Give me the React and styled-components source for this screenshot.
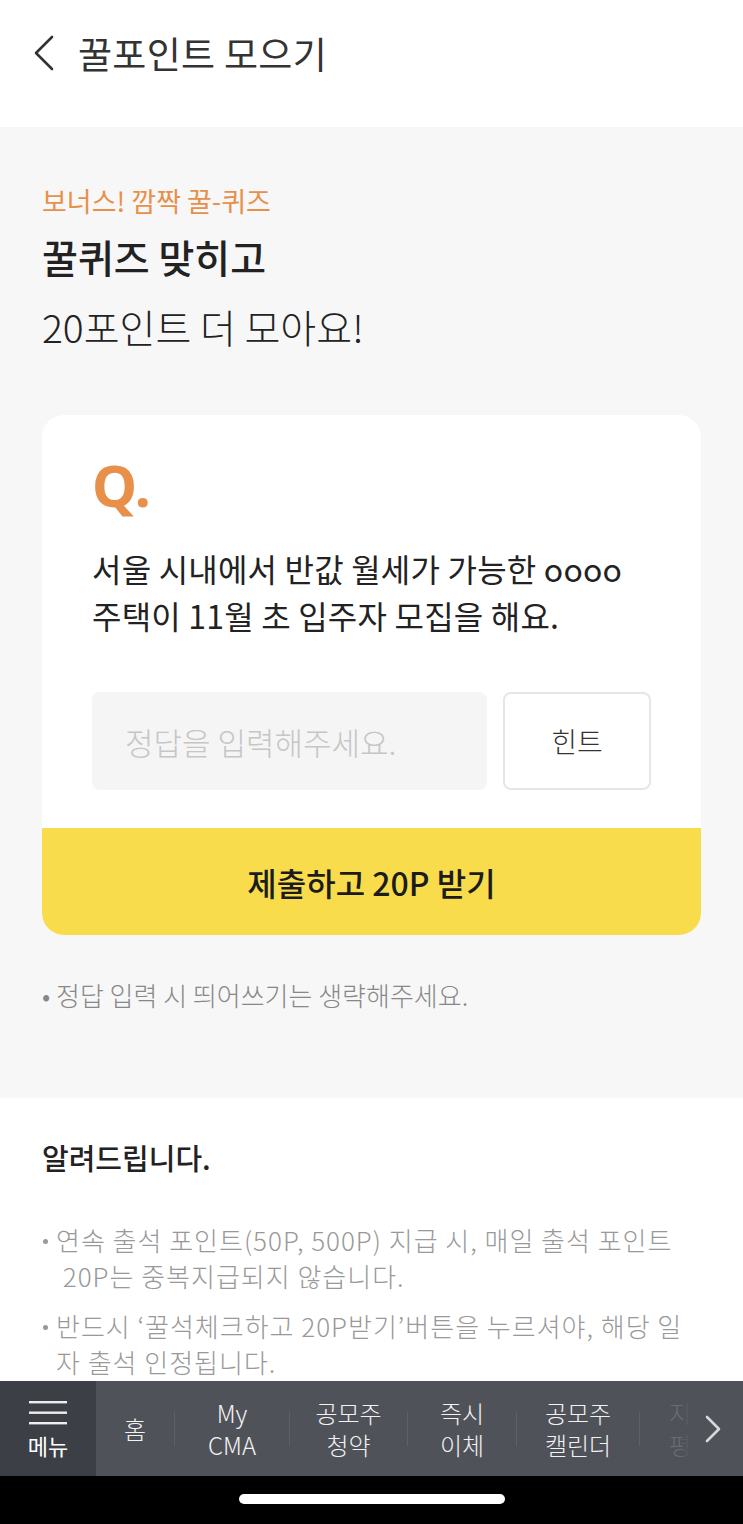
import React from "react";
import styled, { createGlobalStyle } from "styled-components";

const Orange = "#e8904a";
const Yellow = "#f8dc4b";
const TextDark = "#222";

const GlobalStyle = createGlobalStyle`
  html, body {
    margin: 0;
    padding: 0;
    background: #fff;
    font-family: "Noto Sans CJK KR", "Noto Sans", sans-serif;
  }
  * { box-sizing: border-box; }
`;

const Page = styled.div`
  width: 743px;
  height: 1524px;
  display: flex;
  flex-direction: column;
  overflow: hidden;
`;

const Header = styled.header`
  height: 127px;
  flex-shrink: 0;
  display: flex;
  align-items: center;
  padding: 0 0 22px 32px;
  background: #fff;
  gap: 22px;
`;

const Title = styled.h1`
  margin: 0;
  font-size: 37px;
  font-weight: 400;
  color: #333;
  letter-spacing: 0.3px;
`;

const Content = styled.div`
  flex: 1;
  overflow: hidden;
`;

const QuizSection = styled.section`
  background: #f7f7f7;
  padding: 56px 42px 85px;
`;

const Eyebrow = styled.p`
  margin: 0;
  font-size: 27px;
  line-height: 36px;
  color: ${Orange};
`;

const Headline = styled.h2`
  margin: ${(p) => (p.$bold ? 8 : 12)}px 0 0;
  font-size: 39px;
  line-height: 58px;
  font-weight: ${(p) => (p.$bold ? 500 : 300)};
  color: ${TextDark};
`;

const Card = styled.div`
  margin-top: 60px;
  background: #fff;
  border-radius: 22px;
  overflow: hidden;
`;

const CardBody = styled.div`
  padding: 40px 50px 38px;
`;

const QMark = styled.div`
  font-family: "Noto Sans", sans-serif;
  font-size: 57px;
  line-height: 60px;
  font-weight: 700;
  color: ${Orange};
`;

const Question = styled.p`
  margin: 30px 0 0;
  font-size: 32px;
  line-height: 47px;
  color: ${TextDark};
  letter-spacing: 0.2px;
`;

const AnswerRow = styled.div`
  margin-top: 53px;
  display: flex;
  gap: 16px;
`;

const AnswerInput = styled.div`
  flex: 1;
  height: 98px;
  background: #f5f5f5;
  border-radius: 8px;
  display: flex;
  align-items: center;
  padding-left: 33px;
  font-size: 31px;
  font-weight: 300;
  color: #c6c6c6;
`;

const HintButton = styled.div`
  width: 148px;
  height: 98px;
  border: 2px solid #e6e6e6;
  border-radius: 8px;
  display: flex;
  align-items: center;
  justify-content: center;
  font-size: 28px;
  font-weight: 300;
  color: #333;
`;

const SubmitButton = styled.div`
  height: 107px;
  background: ${Yellow};
  display: flex;
  align-items: center;
  justify-content: center;
  font-size: 32px;
  font-weight: 500;
  color: #1c1c1c;
`;

const Note = styled.p`
  margin: 42px 0 0;
  font-size: 26px;
  line-height: 36px;
  font-weight: 300;
  color: #888;
`;

const NoticeSection = styled.section`
  background: #fff;
  padding: 37px 42px 0;
`;

const NoticeTitle = styled.h3`
  margin: 0;
  font-size: 29px;
  line-height: 44px;
  font-weight: 500;
  color: ${TextDark};
`;

const NoticeList = styled.ul`
  margin: 43px 0 0;
  padding: 0;
  list-style: none;
  display: flex;
  flex-direction: column;
  gap: 15px;
`;

const NoticeItem = styled.li`
  position: relative;
  padding-left: 14px;
  font-size: 26px;
  line-height: 35.5px;
  font-weight: 300;
  color: #999;
  letter-spacing: 1px;
  &::before {
    content: "";
    position: absolute;
    left: 1px;
    top: 17px;
    width: 5px;
    height: 5px;
    border-radius: 50%;
    background: #999;
  }
`;

const BottomNav = styled.nav`
  height: 95px;
  flex-shrink: 0;
  display: flex;
  align-items: stretch;
  background: #50525a;
`;

const MenuCell = styled.div`
  width: 96px;
  background: #3d3f46;
  display: flex;
  flex-direction: column;
  align-items: center;
  justify-content: center;
  gap: 6px;
  color: #fff;
  font-size: 22px;
  line-height: 26px;
`;

const NavItems = styled.div`
  flex: 1;
  display: flex;
  align-items: center;
  position: relative;
`;

const NavItem = styled.div`
  width: ${(p) => p.$w}px;
  display: flex;
  flex-direction: column;
  align-items: center;
  justify-content: center;
  font-size: 24px;
  line-height: 35px;
  font-weight: 300;
  color: ${(p) => (p.$faded ? "#6a6c73" : "#f2f2f2")};
`;

const NavLine = styled.span`
  display: block;
  height: 35px;
  margin-top: ${(p) => (p.$first ? 0 : -3)}px;
`;

const Divider = styled.div`
  width: 1px;
  height: 34px;
  background: #5e6067;
`;

const NavArrow = styled.div`
  position: absolute;
  right: 0;
  top: 0;
  bottom: 0;
  width: 60px;
  display: flex;
  align-items: center;
  justify-content: center;
  background: linear-gradient(to right, rgba(80, 82, 90, 0.6), #50525a 40%);
`;

const HomeBar = styled.div`
  height: 48px;
  flex-shrink: 0;
  background: #000;
  display: flex;
  justify-content: center;
  padding-top: 18px;
`;

const Pill = styled.div`
  width: 266px;
  height: 10px;
  border-radius: 5px;
  background: #fff;
`;

const BackIcon = () => (
  <svg width="24" height="36" viewBox="0 0 24 36" fill="none">
    <polyline
      points="20,2 4,18 20,34"
      stroke="#333"
      strokeWidth="2.6"
      strokeLinecap="round"
      strokeLinejoin="round"
    />
  </svg>
);

const MenuIcon = () => (
  <svg width="38" height="26" viewBox="0 0 38 26">
    <rect x="0" y="1" width="38" height="2.4" fill="#eee" />
    <rect x="0" y="11.5" width="38" height="2.4" fill="#eee" />
    <rect x="0" y="22" width="38" height="2.4" fill="#eee" />
  </svg>
);

const ChevronRight = () => (
  <svg width="18" height="30" viewBox="0 0 18 30" fill="none">
    <polyline
      points="3,3 15,15 3,27"
      stroke="#d8d8d8"
      strokeWidth="2.6"
      strokeLinecap="round"
      strokeLinejoin="round"
    />
  </svg>
);

const navItems = [
  { w: 78, lines: ["홈"] },
  { w: 114, lines: ["My", "CMA"] },
  { w: 117, lines: ["공모주", "청약"] },
  { w: 108, lines: ["즉시", "이체"] },
  { w: 122, lines: ["공모주", "캘린더"] },
  { w: 80, lines: ["지", "평"], faded: true },
];

const App = () => (
  <Page>
    <GlobalStyle />
    <Header>
      <BackIcon />
      <Title>꿀포인트 모으기</Title>
    </Header>
    <Content>
      <QuizSection>
        <Eyebrow>보너스! 깜짝 꿀-퀴즈</Eyebrow>
        <Headline $bold>꿀퀴즈 맞히고</Headline>
        <Headline>20포인트 더 모아요!</Headline>
        <Card>
          <CardBody>
            <QMark>Q.</QMark>
            <Question>
              서울 시내에서 반값 월세가 가능한 oooo
              <br />
              주택이 11월 초 입주자 모집을 해요.
            </Question>
            <AnswerRow>
              <AnswerInput>정답을 입력해주세요.</AnswerInput>
              <HintButton>힌트</HintButton>
            </AnswerRow>
          </CardBody>
          <SubmitButton>제출하고 20P 받기</SubmitButton>
        </Card>
        <Note>• 정답 입력 시 띄어쓰기는 생략해주세요.</Note>
      </QuizSection>
      <NoticeSection>
        <NoticeTitle>알려드립니다.</NoticeTitle>
        <NoticeList>
          <NoticeItem>
            연속 출석 포인트(50P, 500P) 지급 시, 매일 출석 포인트
            <br />
            &nbsp;20P는 중복지급되지 않습니다.
          </NoticeItem>
          <NoticeItem>
            반드시 ‘꿀석체크하고 20P받기’버튼을 누르셔야, 해당 일
            <br />자 출석 인정됩니다.
          </NoticeItem>
        </NoticeList>
      </NoticeSection>
    </Content>
    <BottomNav>
      <MenuCell>
        <MenuIcon />
        메뉴
      </MenuCell>
      <NavItems>
        {navItems.map((item, i) => (
          <React.Fragment key={item.lines.join("")}>
            {i > 0 && <Divider />}
            <NavItem $w={item.w} $faded={item.faded}>
              {item.lines.map((l, j) => (
                <NavLine key={l} $first={j === 0}>
                  {l}
                </NavLine>
              ))}
            </NavItem>
          </React.Fragment>
        ))}
        <NavArrow>
          <ChevronRight />
        </NavArrow>
      </NavItems>
    </BottomNav>
    <HomeBar>
      <Pill />
    </HomeBar>
  </Page>
);

export default App;
